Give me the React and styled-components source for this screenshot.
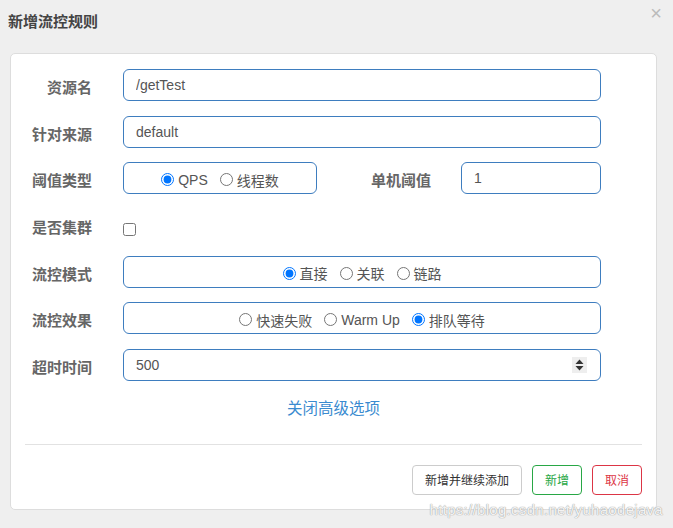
import React from "react";
import styled, { createGlobalStyle } from "styled-components";

const Global = createGlobalStyle`
  html, body { margin: 0; padding: 0; background: #efefef; }
  body { font-family: "Liberation Sans", "Noto Sans CJK SC", sans-serif; }
  * { box-sizing: border-box; }
`;

const Page = styled.div`
  position: relative;
  width: 673px;
  height: 528px;
  background: #efefef;
  overflow: hidden;
`;

const Header = styled.div`
  height: 53px;
  display: flex;
  align-items: flex-start;
  justify-content: space-between;
  padding: 11px 11px 0 8px;
`;

const Title = styled.h4`
  margin: 0;
  font-size: 15px;
  line-height: 21px;
  font-weight: bold;
  color: #444;
`;

const Close = styled.span`
  margin-top: -8px;
  font-size: 20px;
  line-height: 20px;
  color: #bbb;
  font-family: "Liberation Sans", sans-serif;
`;

const Panel = styled.div`
  margin: 0 16px 0 10px;
  height: 457px;
  background: #fff;
  border: 1px solid #ddd;
  border-radius: 5px;
  display: flex;
  flex-direction: column;
`;

const Form = styled.div`
  padding: 15px 55px 0 0;
  display: flex;
  flex-direction: column;
  gap: 14.67px;
`;

const Row = styled.div`
  display: flex;
  align-items: flex-start;
  height: 32px;
`;

const Label = styled.label`
  width: ${(p) => p.$w || 81}px;
  flex: none;
  text-align: right;
  margin-right: ${(p) => p.$mr || 31}px;
  padding-top: 8px;
  line-height: 21px;
  font-size: 15px;
  font-weight: bold;
  color: #666;
`;

const Input = styled.input`
  height: 32px;
  min-width: 0;
  width: ${(p) => (p.$w ? p.$w + "px" : "auto")};
  flex: ${(p) => (p.$w ? "none" : "1")};
  border: 1px solid #3e7dbf;
  border-radius: 6px;
  padding: 0 12px;
  font-family: inherit;
  font-size: 14px;
  color: #555;
  outline: none;
  background: #fff;
`;

const BoxField = styled.div`
  height: 32px;
  min-width: 0;
  width: ${(p) => (p.$w ? p.$w + "px" : "auto")};
  flex: ${(p) => (p.$w ? "none" : "1")};
  border: 1px solid #3e7dbf;
  border-radius: 6px;
  display: flex;
  align-items: center;
  justify-content: ${(p) => p.$justify || "center"};
  padding: ${(p) => (p.$justify ? "0 12px" : "3px 0 0 0")};
  gap: 12px;
  color: #555;
`;

const RadioLabel = styled.label`
  display: flex;
  align-items: center;
  gap: 4px;
  font-size: 14px;
  color: #555;
`;

const Radio = styled.input`
  margin: 0;
  width: 13px;
  height: 13px;
`;

const Check = styled.input`
  margin: 14px 0 0 0;
  width: 13px;
  height: 13px;
`;

const NumText = styled.span`
  flex: 1;
  font-size: 14px;
  color: #555;
`;

const Spinner = styled.span`
  width: 15px;
  height: 16px;
  background: #eee;
  display: flex;
  align-items: center;
  justify-content: center;
  margin-right: 1px;
`;

const LinkRow = styled.div`
  margin-top: 17px;
  text-align: center;
  line-height: 22px;
`;

const Link = styled.a`
  font-size: 15.5px;
  color: #3a8bd0;
  text-decoration: none;
  cursor: pointer;
`;

const Divider = styled.hr`
  margin: 24px 14px 0 14px;
  border: 0;
  border-top: 1px solid #e2e2e2;
`;

const Footer = styled.div`
  display: flex;
  justify-content: flex-end;
  gap: 10px;
  padding: 20px 14px 0 0;
`;

const Button = styled.button`
  height: 30px;
  padding: 0 ${(p) => p.$px || 12}px;
  background: #fff;
  border: 1px solid ${(p) => p.$border};
  color: ${(p) => p.$color};
  border-radius: 4px;
  font-family: inherit;
  font-size: 12px;
  cursor: pointer;
`;

const Watermark = styled.div`
  position: absolute;
  right: 10px;
  top: 501px;
  font-family: "Liberation Sans", sans-serif;
  font-size: 15px;
  letter-spacing: 0.3px;
  color: rgba(255, 255, 255, 0.9);
  text-shadow: 0 0 1px #999, 0 0 1px #aaa;
  pointer-events: none;
`;

export default function App() {
  return (
    <Page>
      <Global />
      <Header>
        <Title>新增流控规则</Title>
        <Close>×</Close>
      </Header>
      <Panel>
        <Form>
          <Row>
            <Label>资源名</Label>
            <Input readOnly value="/getTest" />
          </Row>
          <Row>
            <Label>针对来源</Label>
            <Input readOnly value="default" />
          </Row>
          <Row>
            <Label>阈值类型</Label>
            <BoxField $w={194}>
              <RadioLabel>
                <Radio type="radio" name="grade" defaultChecked />
                QPS
              </RadioLabel>
              <RadioLabel>
                <Radio type="radio" name="grade" />
                线程数
              </RadioLabel>
            </BoxField>
            <Label $w={114} $mr={30}>单机阈值</Label>
            <Input readOnly value="1" />
          </Row>
          <Row>
            <Label>是否集群</Label>
            <Check type="checkbox" />
          </Row>
          <Row>
            <Label>流控模式</Label>
            <BoxField>
              <RadioLabel>
                <Radio type="radio" name="mode" defaultChecked />
                直接
              </RadioLabel>
              <RadioLabel>
                <Radio type="radio" name="mode" />
                关联
              </RadioLabel>
              <RadioLabel>
                <Radio type="radio" name="mode" />
                链路
              </RadioLabel>
            </BoxField>
          </Row>
          <Row>
            <Label>流控效果</Label>
            <BoxField>
              <RadioLabel>
                <Radio type="radio" name="effect" />
                快速失败
              </RadioLabel>
              <RadioLabel>
                <Radio type="radio" name="effect" />
                Warm Up
              </RadioLabel>
              <RadioLabel>
                <Radio type="radio" name="effect" defaultChecked />
                排队等待
              </RadioLabel>
            </BoxField>
          </Row>
          <Row>
            <Label>超时时间</Label>
            <BoxField $justify="space-between">
              <NumText>500</NumText>
              <Spinner>
                <svg width="9" height="12" viewBox="0 0 9 12">
                  <path d="M4.5 0.5 L8.5 5 H0.5 Z" fill="#333" />
                  <path d="M0.5 7 H8.5 L4.5 11.5 Z" fill="#333" />
                </svg>
              </Spinner>
            </BoxField>
          </Row>
        </Form>
        <LinkRow>
          <Link>关闭高级选项</Link>
        </LinkRow>
        <Divider />
        <Footer>
          <Button $border="#ccc" $color="#333" $px={12}>新增并继续添加</Button>
          <Button $border="#28a745" $color="#28a745" $px={12}>新增</Button>
          <Button $border="#dc3545" $color="#dc3545" $px={12}>取消</Button>
        </Footer>
      </Panel>
      <Watermark>https://blog.csdn.net/yuhaodejava</Watermark>
    </Page>
  );
}
